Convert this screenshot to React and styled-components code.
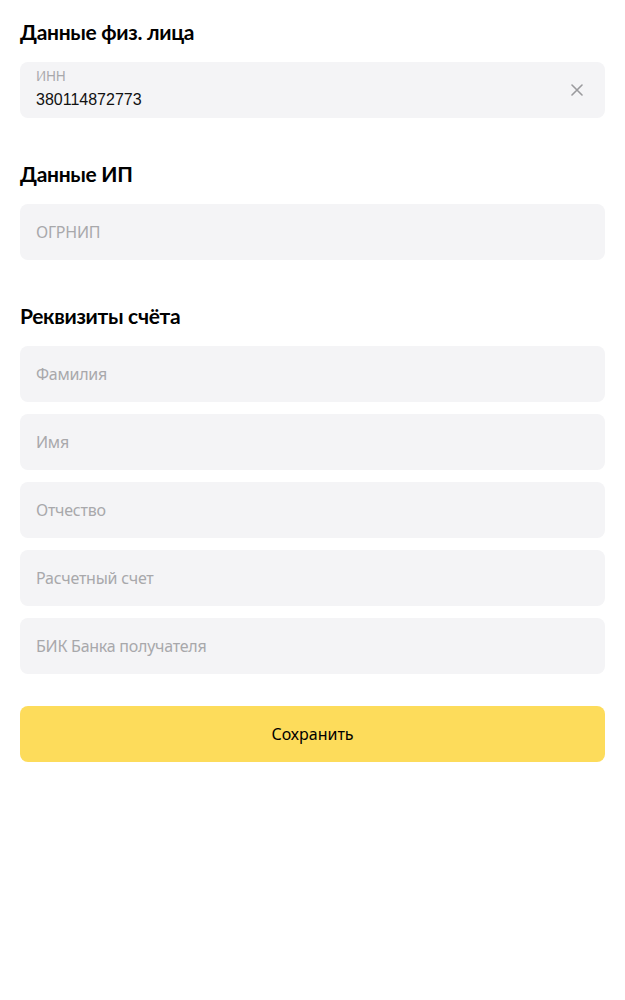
import React from "react";
import styled, { createGlobalStyle } from "styled-components";

const Global = createGlobalStyle`
  html, body { margin: 0; padding: 0; background: #fff; }
  body { font-family: "Noto Sans", "Open Sans", sans-serif; color: #000; }
  * { box-sizing: border-box; }
`;

const Page = styled.div`
  padding: 20px 20px 40px;
  display: flex;
  flex-direction: column;
`;

const Section = styled.section`
  display: flex;
  flex-direction: column;
  gap: 12px;
  & + & { margin-top: 44px; }
`;

const Title = styled.h2`
  margin: 0 0 6px;
  font-family: "Lato", "Noto Sans", sans-serif;
  font-weight: 700;
  font-size: 21px;
  line-height: 24px;
  letter-spacing: -0.3px;
  color: #000;
`;

const Field = styled.div`
  position: relative;
  height: 56px;
  border-radius: 8px;
  background: #f4f4f6;
  display: flex;
  flex-direction: column;
  justify-content: ${(p) => (p.$filled ? "flex-start" : "center")};
  padding: ${(p) => (p.$filled ? "6px 48px 0 16px" : "0 48px 0 16px")};
`;

const Label = styled.div`
  font-family: "Noto Sans", sans-serif;
  font-size: 13.5px;
  line-height: 16px;
  letter-spacing: -0.2px;
  color: #a8a8ab;
`;

const Value = styled.div`
  font-family: "Liberation Sans", Arial, sans-serif;
  font-size: 16px;
  line-height: 20px;
  color: #111;
  margin-top: 6px;
`;

const Placeholder = styled.div`
  font-family: "Noto Sans", sans-serif;
  font-size: 16px;
  line-height: 20px;
  letter-spacing: -0.25px;
  color: #a8a8ab;
`;

const Clear = styled.button`
  position: absolute;
  right: 20px;
  top: 50%;
  transform: translateY(-50%);
  width: 16px;
  height: 16px;
  padding: 0;
  border: 0;
  background: none;
  display: flex;
  align-items: center;
  justify-content: center;
  cursor: pointer;
`;

const SaveButton = styled.button`
  margin-top: 32px;
  height: 56px;
  border: 0;
  border-radius: 8px;
  background: #fddc5b;
  font-family: "Noto Sans", sans-serif;
  font-size: 16px;
  color: #000;
  cursor: pointer;
`;

function Input({ label, value, placeholder }) {
  if (value) {
    return (
      <Field $filled>
        <Label>{label}</Label>
        <Value>{value}</Value>
        <Clear aria-label="Очистить">
          <svg width="12" height="12" viewBox="0 0 12 12">
            <path d="M1 1L11 11M11 1L1 11" stroke="#9a9a9d" strokeWidth="1.6" strokeLinecap="round" />
          </svg>
        </Clear>
      </Field>
    );
  }
  return (
    <Field>
      <Placeholder>{placeholder}</Placeholder>
    </Field>
  );
}

export default function App() {
  return (
    <>
      <Global />
      <Page>
        <Section>
          <Title>Данные физ. лица</Title>
          <Input label="ИНН" value="380114872773" />
        </Section>
        <Section>
          <Title>Данные ИП</Title>
          <Input placeholder="ОГРНИП" />
        </Section>
        <Section>
          <Title>Реквизиты счёта</Title>
          <Input placeholder="Фамилия" />
          <Input placeholder="Имя" />
          <Input placeholder="Отчество" />
          <Input placeholder="Расчетный счет" />
          <Input placeholder="БИК Банка получателя" />
        </Section>
        <SaveButton>Сохранить</SaveButton>
      </Page>
    </>
  );
}
